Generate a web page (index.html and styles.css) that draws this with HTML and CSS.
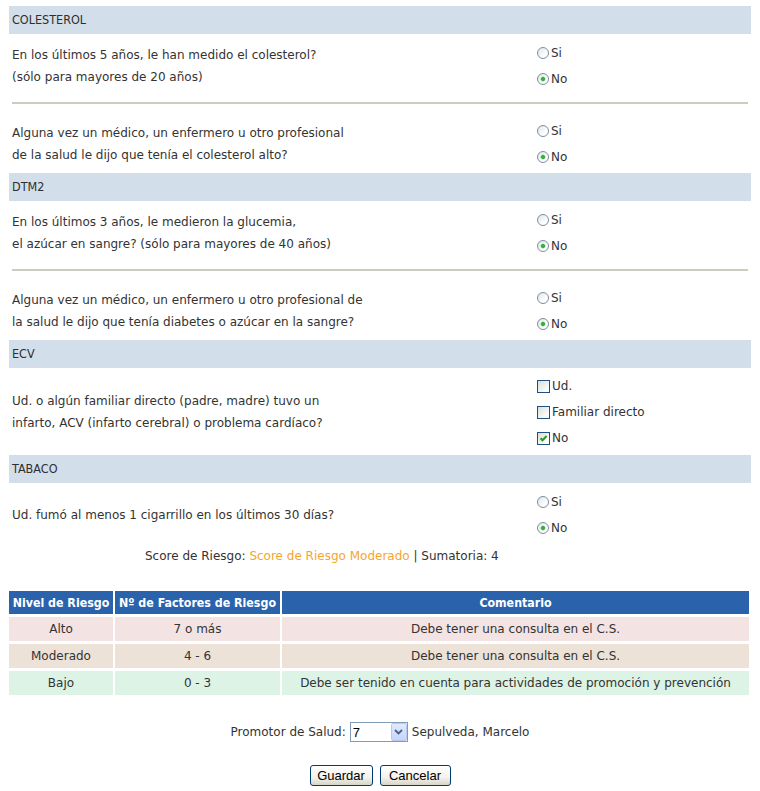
FILE: index.html
```html
<!DOCTYPE html>
<html lang="es">
<head>
<meta charset="utf-8">
<title>Factores de riesgo</title>
<link rel="stylesheet" href="styles.css">
</head>
<body>
<div class="page">
  <div class="sec">COLESTEROL</div>
  <div class="q">
    <div class="qt">En los últimos 5 años, le han medido el colesterol?<br>(sólo para mayores de 20 años)</div>
    <div class="opts">
      <label class="opt"><input type="radio" name="q1" class="rd">Si</label>
      <label class="opt"><input type="radio" name="q1" class="rd" checked>No</label>
    </div>
  </div>
  <div class="sep"></div>
  <div class="q">
    <div class="qt">Alguna vez un médico, un enfermero u otro profesional<br>de la salud le dijo que tenía el colesterol alto?</div>
    <div class="opts">
      <label class="opt"><input type="radio" name="q2" class="rd">Si</label>
      <label class="opt"><input type="radio" name="q2" class="rd" checked>No</label>
    </div>
  </div>
  <div class="sec">DTM2</div>
  <div class="q">
    <div class="qt">En los últimos 3 años, le medieron la glucemia,<br>el azúcar en sangre? (sólo para mayores de 40 años)</div>
    <div class="opts">
      <label class="opt"><input type="radio" name="q3" class="rd">Si</label>
      <label class="opt"><input type="radio" name="q3" class="rd" checked>No</label>
    </div>
  </div>
  <div class="sep"></div>
  <div class="q">
    <div class="qt">Alguna vez un médico, un enfermero u otro profesional de<br>la salud le dijo que tenía diabetes o azúcar en la sangre?</div>
    <div class="opts">
      <label class="opt"><input type="radio" name="q4" class="rd">Si</label>
      <label class="opt"><input type="radio" name="q4" class="rd" checked>No</label>
    </div>
  </div>
  <div class="sec">ECV</div>
  <div class="q q-ecv">
    <div class="qt">Ud. o algún familiar directo (padre, madre) tuvo un<br>infarto, ACV (infarto cerebral) o problema cardíaco?</div>
    <div class="opts">
      <label class="opt"><input type="checkbox" class="cb">Ud.</label>
      <label class="opt"><input type="checkbox" class="cb">Familiar directo</label>
      <label class="opt"><input type="checkbox" class="cb" checked>No</label>
    </div>
  </div>
  <div class="sec">TABACO</div>
  <div class="q q-tab">
    <div class="qt">Ud. fumó al menos 1 cigarrillo en los últimos 30 días?</div>
    <div class="opts">
      <label class="opt"><input type="radio" name="q6" class="rd">Si</label>
      <label class="opt"><input type="radio" name="q6" class="rd" checked>No</label>
    </div>
  </div>
  <div class="score">Score de Riesgo: <span class="mod">Score de Riesgo Moderado</span> | Sumatoria: 4</div>

  <table class="nivel">
    <thead>
      <tr><th class="c1">Nivel de Riesgo</th><th class="c2">Nº de Factores de Riesgo</th><th class="c3">Comentario</th></tr>
    </thead>
    <tbody>
      <tr class="alto"><td>Alto</td><td>7 o más</td><td>Debe tener una consulta en el C.S.</td></tr>
      <tr class="moderado"><td>Moderado</td><td>4 - 6</td><td>Debe tener una consulta en el C.S.</td></tr>
      <tr class="bajo"><td>Bajo</td><td>0 - 3</td><td>Debe ser tenido en cuenta para actividades de promoción y prevención</td></tr>
    </tbody>
  </table>

  <div class="promotor">
    <span>Promotor de Salud:</span>
    <span class="selwrap">
      <select class="sel"><option>7</option></select>
      <span class="selbtn"><svg width="9" height="6" viewBox="0 0 9 6"><path d="M1 1 L4.5 4.5 L8 1" fill="none" stroke="#4d6185" stroke-width="1.8"/></svg></span>
    </span>
    <span>Sepulveda, Marcelo</span>
  </div>
  <div class="btns">
    <button class="btn">Guardar</button>
    <button class="btn">Cancelar</button>
  </div>
</div>
</body>
</html>
```

FILE: styles.css
```css
html, body {
  margin: 0;
  padding: 0;
  background: #ffffff;
}
body {
  font-family: "DejaVu Sans", sans-serif;
  font-size: 12px;
  color: #333333;
}
.page {
  padding: 6px 9px 0 9px;
  width: 742px;
}
.sec {
  height: 28px;
  line-height: 28px;
  background: #d3deeb;
  padding-left: 3px;
  font-family: "DejaVu Sans Condensed", "DejaVu Sans", sans-serif;
  font-stretch: condensed;
  font-size: 12.5px;
  color: #2e2e2e;
}
.q {
  display: grid;
  grid-template-columns: 528px 1fr;
  align-items: center;
  padding: 6px 0 3px;
}
.q-ecv {
  padding: 5px 0 4px;
}
.q-tab {
  padding: 6px 0 0;
}
.qt {
  padding-left: 3px;
  line-height: 22px;
}
.opts {
  display: flex;
  flex-direction: column;
}
.opt {
  height: 26px;
  display: flex;
  align-items: center;
  gap: 2px;
}
.rd {
  appearance: none;
  -webkit-appearance: none;
  margin: 0;
  width: 12px;
  height: 12px;
  border-radius: 50%;
  border: 1px solid #7c8da4;
  background: linear-gradient(135deg, #dfe3e8 0%, #ffffff 70%);
}
.rd:checked {
  background: radial-gradient(circle, #35b235 0 1.6px, #9fd89f 2.2px, transparent 2.8px), linear-gradient(135deg, #dfe3e8 0%, #ffffff 70%);
}
.cb {
  appearance: none;
  -webkit-appearance: none;
  margin: 0;
  width: 13px;
  height: 13px;
  border: 1px solid #1c5180;
  background: linear-gradient(135deg, #dcdcd6 0%, #ffffff 85%);
}
.cb:checked {
  background: url("data:image/svg+xml,%3Csvg xmlns='http://www.w3.org/2000/svg' width='11' height='11' viewBox='0 0 11 11'%3E%3Cpath d='M2.5 5.2 L4.5 7.3 L8.6 3' fill='none' stroke='%2321a121' stroke-width='2'/%3E%3C/svg%3E") center/11px 11px no-repeat, linear-gradient(135deg, #dcdcd6 0%, #ffffff 85%);
}
.sep {
  height: 2px;
  background: #cdcbbd;
  margin: 7px 3px 8px;
}
.score {
  height: 28px;
  line-height: 28px;
  padding-top: 1px;
  padding-left: 136px;
}
.mod {
  color: #f5a52c;
}
.nivel {
  margin: 18px 0 0 -2px;
  border-collapse: separate;
  border-spacing: 2px 3px;
  width: 744px;
  font-size: 12px;
}
.nivel th {
  background: #2a63ac;
  color: #ffffff;
  font-weight: bold;
  font-family: "DejaVu Sans Condensed", "DejaVu Sans", sans-serif;
  font-stretch: condensed;
  font-size: 12.3px;
  height: 23px;
  padding: 0;
}
.nivel td {
  height: 24px;
  text-align: center;
  padding: 0;
}
.nivel .c1 { width: 104px; }
.nivel .c2 { width: 165px; }
.alto td { background: #f3e3e3; }
.moderado td { background: #ede2d8; }
.bajo td { background: #dcf3e5; }
.promotor {
  margin-top: 24px;
  display: flex;
  justify-content: center;
  align-items: center;
  gap: 4px;
  height: 20px;
}
.selwrap {
  position: relative;
  display: inline-block;
  width: 58px;
  height: 20px;
}
.sel {
  appearance: none;
  -webkit-appearance: none;
  width: 58px;
  height: 20px;
  margin: 0;
  border: 1px solid #7f9db9;
  border-radius: 0;
  background: #ffffff;
  font-family: "Liberation Sans", Arial, sans-serif;
  font-size: 13px;
  color: #000000;
  padding: 0 0 0 2px;
}
.selbtn {
  position: absolute;
  right: 1px;
  top: 1px;
  width: 16px;
  height: 18px;
  box-sizing: border-box;
  border: 1px solid #b9c9ef;
  border-radius: 2px;
  background: linear-gradient(180deg, #e1eafe 0%, #c5d4fb 100%);
  display: flex;
  align-items: center;
  justify-content: center;
  pointer-events: none;
}
.btns {
  margin-top: 23px;
  display: flex;
  justify-content: center;
  gap: 7px;
}
.btn {
  font-family: "Liberation Sans", Arial, sans-serif;
  font-size: 13px;
  color: #000000;
  height: 21px;
  padding: 0 6px;
  border: 1px solid #003c74;
  border-radius: 3px;
  background: linear-gradient(180deg, #ffffff 0%, #f3f2ec 60%, #d8d5c7 100%);
}
.btn:first-child { width: 63px; }
.btn:last-child { width: 71px; }
```
